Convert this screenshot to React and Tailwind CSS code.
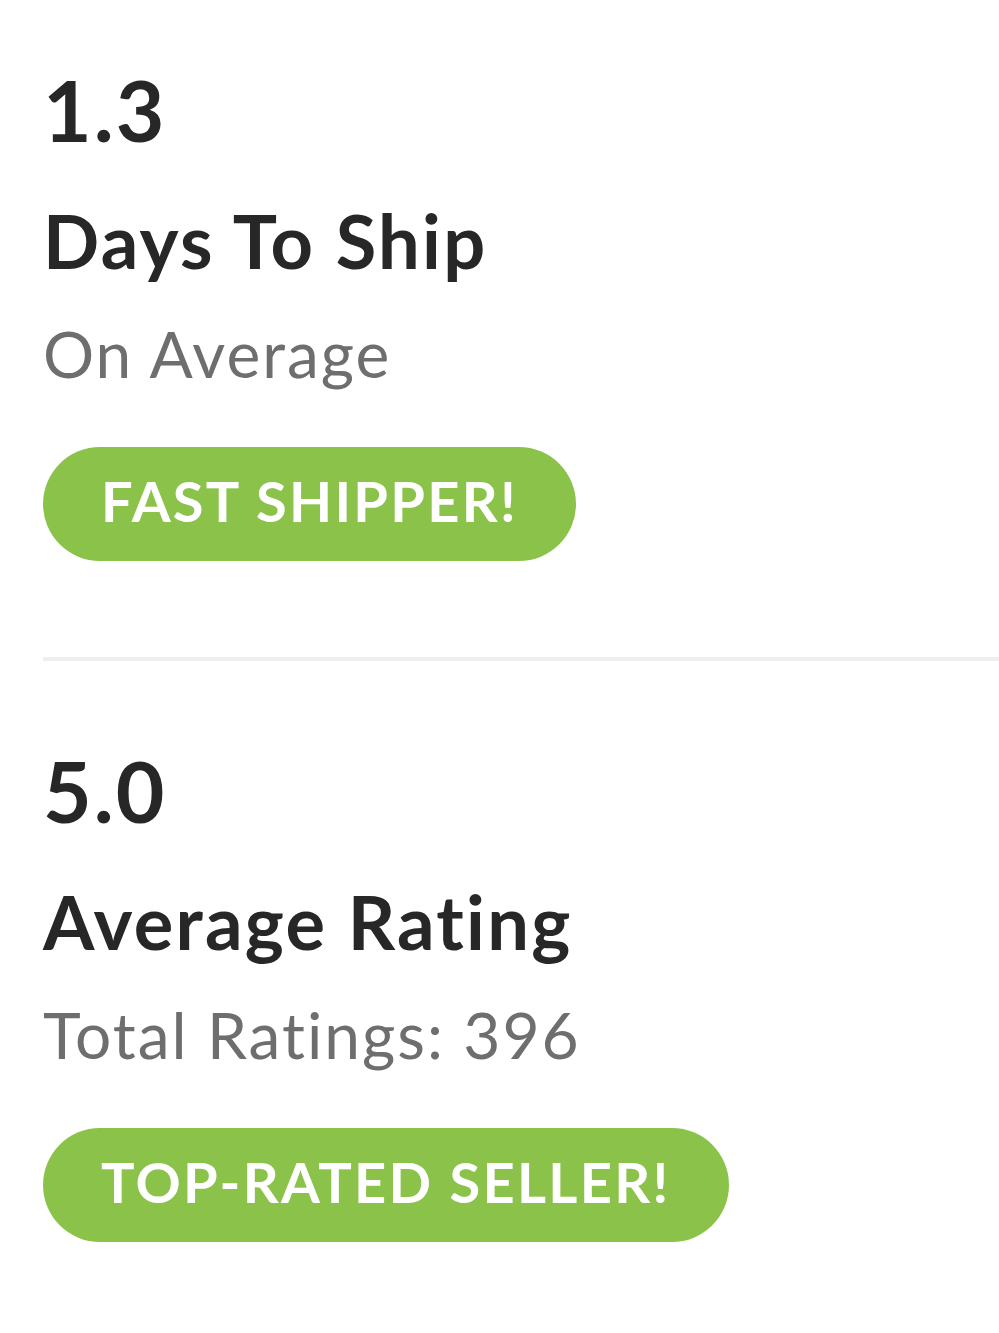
// Seller stats panel: shipping speed + rating blocks.
function Stat({ value, label, sub, badge }) {
  return (
    <div className="flex flex-col items-start">
      <p className="text-[84px] leading-[84px] font-bold text-[#272727] tracking-[2px]">{value}</p>
      <p className="mt-[49px] text-[74px] leading-[80px] font-bold text-[#272727] tracking-[2.3px]">{label}</p>
      <p className="mt-[37px] text-[64px] leading-[72px] text-[#6e6e6e] tracking-[2px]">{sub}</p>
      <div className="mt-[57px] h-[114px] rounded-full bg-[#8bc34a] pl-[58px] pr-[58px] pb-[6px] flex items-center">
        <span className="text-[56px] font-bold text-white tracking-[2.3px]">{badge}</span>
      </div>
    </div>
  )
}

export default function App() {
  return (
    <div className="min-h-[1333px] bg-white pl-[43px] pt-[68px]" style={{ fontFamily: 'Lato, "Noto Sans", sans-serif' }}>
      <Stat value="1.3" label="Days To Ship" sub="On Average" badge="FAST SHIPPER!" />
      <div className="mt-[96px] h-[4px] bg-[#eeeeee]" />
      <div className="mt-[88px]">
        <Stat value="5.0" label="Average Rating" sub="Total Ratings: 396" badge="TOP-RATED SELLER!" />
      </div>
    </div>
  )
}
